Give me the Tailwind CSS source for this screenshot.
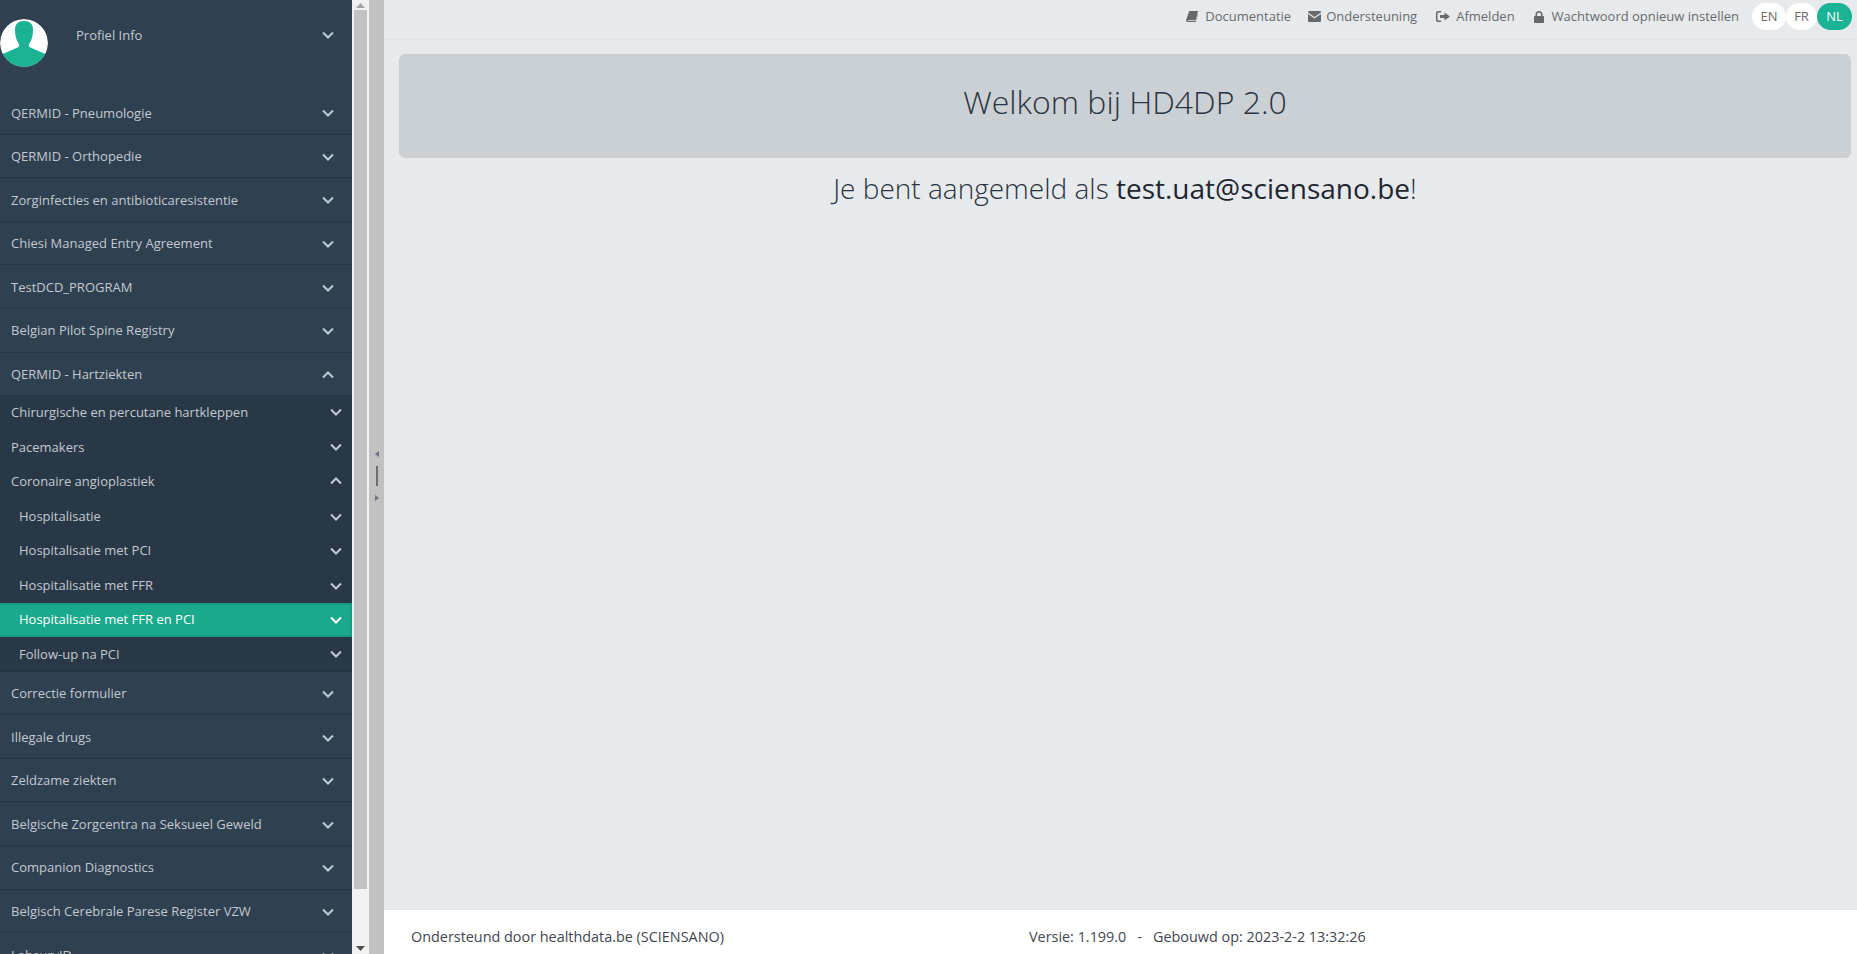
<!DOCTYPE html>
<html lang="en">
<head>
  <meta charset="UTF-8">
  <title>HD4DP 2.0</title>
  <script src="https://cdn.jsdelivr.net/npm/@tailwindcss/browser@4"></script>
</head>
<body class="h-screen overflow-hidden flex bg-[#e7eaec] text-[#676a6c] font-['Open_Sans',sans-serif] text-[13px]">

  <!-- sidebar -->
  <nav class="w-[352px] h-[954px] shrink-0 overflow-hidden bg-[#2f4050] text-[#c2c9d0]">
    <div class="h-[91px] flex items-start">
      <svg class="w-12 h-12 mt-[19px] ml-0 shrink-0 rounded-full" viewBox="0 0 48 48">
        <circle cx="24" cy="24" r="24" fill="#fff"/>
        <path d="M24 2c6 0 9 3 9 9 0 5-1 10-4 14-.6 2 0 3 1.500 3.500L45.300 35A24 24 0 0 1 2.700 35l14.800-6.500c1.500-.5 2.100-1.500 1.500-3.500-3-4-4-9-4-14 0-6 3-9 9-9z" fill="#1ab394"/>
      </svg>
      <span class="ml-[28px] mt-[26px] leading-[18px]">Profiel Info</span>
      <svg class="w-3 h-3 ml-auto mr-[18px] mt-[29px]" viewBox="0 0 12 12" fill="none" stroke="#c2c9d0" stroke-width="2"><path d="M1 3.500l5 5 5-5"/></svg>
    </div>
    <ul>
      <li class="h-[43.6px] flex items-center justify-between pt-[2px] pl-[11px] pr-[18px] border-b border-[#293846]">QERMID - Pneumologie<svg class="w-3 h-3" viewBox="0 0 12 12" fill="none" stroke="#c2c9d0" stroke-width="2"><path d="M1 3.500l5 5 5-5"/></svg></li>
      <li class="h-[43.6px] flex items-center justify-between pt-[2px] pl-[11px] pr-[18px] border-b border-[#293846]">QERMID - Orthopedie<svg class="w-3 h-3" viewBox="0 0 12 12" fill="none" stroke="#c2c9d0" stroke-width="2"><path d="M1 3.500l5 5 5-5"/></svg></li>
      <li class="h-[43.6px] flex items-center justify-between pt-[2px] pl-[11px] pr-[18px] border-b border-[#293846]">Zorginfecties en antibioticaresistentie<svg class="w-3 h-3" viewBox="0 0 12 12" fill="none" stroke="#c2c9d0" stroke-width="2"><path d="M1 3.500l5 5 5-5"/></svg></li>
      <li class="h-[43.6px] flex items-center justify-between pt-[2px] pl-[11px] pr-[18px] border-b border-[#293846]">Chiesi Managed Entry Agreement<svg class="w-3 h-3" viewBox="0 0 12 12" fill="none" stroke="#c2c9d0" stroke-width="2"><path d="M1 3.500l5 5 5-5"/></svg></li>
      <li class="h-[43.6px] flex items-center justify-between pt-[2px] pl-[11px] pr-[18px] border-b border-[#293846]">TestDCD_PROGRAM<svg class="w-3 h-3" viewBox="0 0 12 12" fill="none" stroke="#c2c9d0" stroke-width="2"><path d="M1 3.500l5 5 5-5"/></svg></li>
      <li class="h-[43.6px] flex items-center justify-between pt-[1px] pl-[11px] pr-[18px] border-b border-[#293846]">Belgian Pilot Spine Registry<svg class="w-3 h-3" viewBox="0 0 12 12" fill="none" stroke="#c2c9d0" stroke-width="2"><path d="M1 3.500l5 5 5-5"/></svg></li>
      <li class="h-[42.4px] flex items-center justify-between pt-[2px] pl-[11px] pr-[18px]">QERMID - Hartziekten<svg class="w-3 h-3" viewBox="0 0 12 12" fill="none" stroke="#c2c9d0" stroke-width="2"><path d="M1 8.500l5-5 5 5"/></svg></li>

      <li>
        <ul class="bg-[#293846] border-b border-[#253240]">
          <li class="h-[34.6px] flex items-center justify-between pl-[11px] pr-[10px]">Chirurgische en percutane hartkleppen<svg class="w-3 h-3" viewBox="0 0 12 12" fill="none" stroke="#c2c9d0" stroke-width="2"><path d="M1 3.500l5 5 5-5"/></svg></li>
          <li class="h-[34.6px] flex items-center justify-between pt-[1px] pl-[11px] pr-[10px]">Pacemakers<svg class="w-3 h-3" viewBox="0 0 12 12" fill="none" stroke="#c2c9d0" stroke-width="2"><path d="M1 3.500l5 5 5-5"/></svg></li>
          <li class="h-[34.6px] flex items-center justify-between pl-[11px] pr-[10px]">Coronaire angioplastiek<svg class="w-3 h-3" viewBox="0 0 12 12" fill="none" stroke="#c2c9d0" stroke-width="2"><path d="M1 8.500l5-5 5 5"/></svg></li>
          <li class="h-[34.6px] flex items-center justify-between pt-[1px] pl-[19px] pr-[10px]">Hospitalisatie<svg class="w-3 h-3" viewBox="0 0 12 12" fill="none" stroke="#c2c9d0" stroke-width="2"><path d="M1 3.500l5 5 5-5"/></svg></li>
          <li class="h-[34.6px] flex items-center justify-between pl-[19px] pr-[10px]">Hospitalisatie met PCI<svg class="w-3 h-3" viewBox="0 0 12 12" fill="none" stroke="#c2c9d0" stroke-width="2"><path d="M1 3.500l5 5 5-5"/></svg></li>
          <li class="h-[34.6px] flex items-center justify-between pt-[1px] pl-[19px] pr-[10px]">Hospitalisatie met FFR<svg class="w-3 h-3" viewBox="0 0 12 12" fill="none" stroke="#c2c9d0" stroke-width="2"><path d="M1 3.500l5 5 5-5"/></svg></li>
          <li class="h-[34.6px] flex items-center justify-between pl-[19px] pr-[8px] bg-[#1aa98b] text-white border-y-2 border-r-2 border-[#169c80]">Hospitalisatie met FFR en PCI<svg class="w-3 h-3" viewBox="0 0 12 12" fill="none" stroke="#fff" stroke-width="2"><path d="M1 3.500l5 5 5-5"/></svg></li>
          <li class="h-[33.6px] flex items-center justify-between pt-[1px] pl-[19px] pr-[10px]">Follow-up na PCI<svg class="w-3 h-3" viewBox="0 0 12 12" fill="none" stroke="#c2c9d0" stroke-width="2"><path d="M1 3.500l5 5 5-5"/></svg></li>
        </ul>
      </li>

      <li class="h-[43.6px] flex items-center justify-between pt-[2px] pl-[11px] pr-[18px] border-b border-[#293846]">Correctie formulier<svg class="w-3 h-3" viewBox="0 0 12 12" fill="none" stroke="#c2c9d0" stroke-width="2"><path d="M1 3.500l5 5 5-5"/></svg></li>
      <li class="h-[43.6px] flex items-center justify-between pt-[2px] pl-[11px] pr-[18px] border-b border-[#293846]">Illegale drugs<svg class="w-3 h-3" viewBox="0 0 12 12" fill="none" stroke="#c2c9d0" stroke-width="2"><path d="M1 3.500l5 5 5-5"/></svg></li>
      <li class="h-[43.6px] flex items-center justify-between pt-[2px] pl-[11px] pr-[18px] border-b border-[#293846]">Zeldzame ziekten<svg class="w-3 h-3" viewBox="0 0 12 12" fill="none" stroke="#c2c9d0" stroke-width="2"><path d="M1 3.500l5 5 5-5"/></svg></li>
      <li class="h-[43.6px] flex items-center justify-between pt-[2px] pl-[11px] pr-[18px] border-b border-[#293846]">Belgische Zorgcentra na Seksueel Geweld<svg class="w-3 h-3" viewBox="0 0 12 12" fill="none" stroke="#c2c9d0" stroke-width="2"><path d="M1 3.500l5 5 5-5"/></svg></li>
      <li class="h-[43.6px] flex items-center justify-between pt-[1px] pl-[11px] pr-[18px] border-b border-[#293846]">Companion Diagnostics<svg class="w-3 h-3" viewBox="0 0 12 12" fill="none" stroke="#c2c9d0" stroke-width="2"><path d="M1 3.500l5 5 5-5"/></svg></li>
      <li class="h-[43.6px] flex items-center justify-between pt-[2px] pl-[11px] pr-[18px] border-b border-[#293846]">Belgisch Cerebrale Parese Register VZW<svg class="w-3 h-3" viewBox="0 0 12 12" fill="none" stroke="#c2c9d0" stroke-width="2"><path d="M1 3.500l5 5 5-5"/></svg></li>
      <li class="h-[43.6px] flex items-center justify-between pt-[2px] pl-[11px] pr-[18px] border-b border-[#293846]">LabsurvID<svg class="w-3 h-3" viewBox="0 0 12 12" fill="none" stroke="#c2c9d0" stroke-width="2"><path d="M1 3.500l5 5 5-5"/></svg></li>
    </ul>
  </nav>

  <!-- sidebar scrollbar -->
  <div class="w-[17px] shrink-0 h-full flex flex-col bg-[#f1f1f1]">
    <div class="h-[10px] flex items-center justify-center text-[#a3a3a3]"><svg class="w-[9px] h-[5px]" viewBox="0 0 9 5"><path d="M0 5l4.500-5L9 5z" fill="currentColor"/></svg></div>
    <div class="h-[879px] mx-[2px] bg-[#c1c1c1]"></div>
    <div class="flex-1"></div>
    <div class="h-[12px] flex items-center justify-center text-[#505050]"><svg class="w-[9px] h-[5px]" viewBox="0 0 9 5"><path d="M0 0l4.500 5L9 0z" fill="currentColor"/></svg></div>
  </div>

  <!-- splitter -->
  <div class="w-[15px] shrink-0 h-full bg-[#c1c1c1] flex flex-col items-center justify-center gap-[9px] pb-[2px]">
    <svg class="w-[4px] h-[6px]" viewBox="0 0 4 6"><path d="M4 0v6L0 3z" fill="#6b7480"/></svg>
    <div class="w-[2px] h-[20px] bg-[#6f6f6f]"></div>
    <svg class="w-[4px] h-[6px]" viewBox="0 0 4 6"><path d="M0 0v6l4-3z" fill="#6b7480"/></svg>
  </div>

  <!-- main -->
  <div class="flex-1 min-w-0 h-full flex flex-col">
    <header class="h-[40px] shrink-0 flex items-start justify-end gap-[19px] pt-[3px] pr-[5px] border-b border-[#dfe3e6]">
      <a class="h-[27px] flex items-center gap-[7px] -mr-[2px]">
        <svg class="w-[12px] h-[11px]" viewBox="0 0 12 11" fill="#676a6c" fill-rule="evenodd"><path d="M3.200 0H12l-2.300 9.200H2.300c-.8 0-.9.800-.1.800h7.600l2-7.500.2.400L9.900 11H1.700C.5 11-.2 10.200.1 9z"/></svg>
        Documentatie</a>
      <a class="h-[27px] flex items-center gap-[5px]">
        <svg class="w-[13px] h-[11px]" viewBox="0 0 13 11" fill="#676a6c"><path d="M1 0h11a1 1 0 0 1 1 1v.6L6.500 6 0 1.600V1a1 1 0 0 1 1-1zM0 3l6.500 4.400L13 3v7a1 1 0 0 1-1 1H1a1 1 0 0 1-1-1z"/></svg>
        Ondersteuning</a>
      <a class="h-[27px] flex items-center gap-[6px]">
        <svg class="w-[14px] h-[11px]" viewBox="0 0 14 11" fill="#676a6c"><path d="M2 0h3v1.500H2.500a1 1 0 0 0-1 1v6a1 1 0 0 0 1 1H5V11H2a2 2 0 0 1-2-2V2a2 2 0 0 1 2-2zM8.500 1.500L14 5.500 8.500 9.500V7H4V4h4.500z"/></svg>
        Afmelden</a>
      <a class="h-[27px] flex items-center gap-[8px]">
        <svg class="w-[10px] h-[12px]" viewBox="0 0 10 12" fill="#676a6c"><path d="M1.500 5V3.500a3.500 3.500 0 0 1 7 0V5h.7a.8.8 0 0 1 .8.800v5.400a.8.8 0 0 1-.8.800H.8a.8.8 0 0 1-.8-.8V5.800A.8.8 0 0 1 .8 5zM3 5h4V3.500a2 2 0 0 0-4 0z"/></svg>
        Wachtwoord opnieuw instellen</a>
      <div class="flex items-center ml-[-6px]">
        <span class="h-[27px] w-[34px] rounded-full bg-white flex items-center justify-center">EN</span>
        <span class="h-[27px] w-[31px] rounded-full bg-white flex items-center justify-center">FR</span>
        <span class="h-[27px] w-[35px] rounded-full bg-[#1ab394] text-white flex items-center justify-center">NL</span>
      </div>
    </header>

    <main class="flex-1 px-[15px] pt-[14px] pr-[6px]">
      <div class="h-[104px] pb-[8px] rounded-[6px] bg-[#cbd0d4] flex items-center justify-center text-[32px] font-light text-[#2b3440]">Welkom bij HD4DP 2.0</div>
      <p class="mt-[11px] text-center text-[28px] leading-[38px] font-light text-[#2b3440]">Je bent aangemeld als <span class="font-normal text-[#1f2630]">test.uat@sciensano.be</span>!</p>
    </main>

    <footer class="h-[45px] pt-[9px] shrink-0 bg-white border-t border-[#e1e5e8] flex items-center pl-[27px] text-[14.4px] text-[#3f4650]">
      <span class="w-[618px]">Ondersteund door healthdata.be (SCIENSANO)</span>
      <span>Versie: 1.199.0<span class="mx-[11px]">-</span>Gebouwd op: 2023-2-2 13:32:26</span>
    </footer>
  </div>
</body>
</html>
